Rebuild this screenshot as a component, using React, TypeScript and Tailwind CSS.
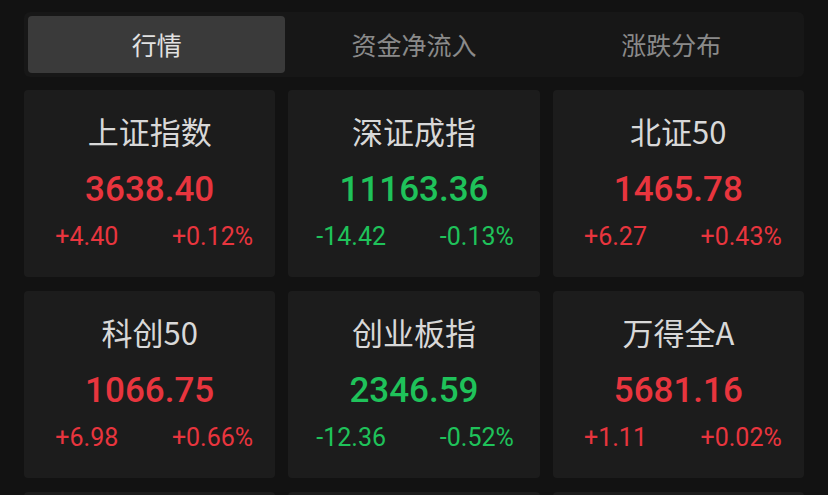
import React from 'react';

type Index = {
  name: string;
  price: string;
  change: string;
  percent: string;
  up: boolean;
};

const indices: Index[] = [
  { name: '上证指数', price: '3638.40', change: '+4.40', percent: '+0.12%', up: true },
  { name: '深证成指', price: '11163.36', change: '-14.42', percent: '-0.13%', up: false },
  { name: '北证50', price: '1465.78', change: '+6.27', percent: '+0.43%', up: true },
  { name: '科创50', price: '1066.75', change: '+6.98', percent: '+0.66%', up: true },
  { name: '创业板指', price: '2346.59', change: '-12.36', percent: '-0.52%', up: false },
  { name: '万得全A', price: '5681.16', change: '+1.11', percent: '+0.02%', up: true },
];

const tabs = ['行情', '资金净流入', '涨跌分布'];

const cjk = { fontFamily: '"Noto Sans CJK SC", "Noto Sans", sans-serif' };
const num = { fontFamily: 'Roboto, "Noto Sans CJK SC", sans-serif' };

const IndexCard: React.FC<{ item: Index }> = ({ item }) => {
  const color = item.up ? 'text-[#e8353e]' : 'text-[#1fc25a]';
  return (
    <div className="h-[187px] bg-[#1c1c1c] rounded-[4px] flex flex-col items-center pt-[21px]">
      <span className="text-[31px] leading-[40px] text-[#d8d8d8]" style={cjk}>
        {item.name}
      </span>
      <span className={`mt-[17px] text-[35px] leading-[44px] font-medium ${color}`} style={num}>
        {item.price}
      </span>
      <div className={`mt-[10px] w-full flex text-[25px] leading-[30px] ${color}`} style={num}>
        <span className="flex-1 text-center">{item.change}</span>
        <span className="flex-1 text-center">{item.percent}</span>
      </div>
    </div>
  );
};

const App: React.FC = () => {
  return (
    <div className="w-[828px] h-[495px] overflow-hidden bg-[#121212] px-[24px] pt-[12px]">
      <div className="h-[65px] bg-[#171717] rounded-[6px] p-[4px] flex">
        {tabs.map((t, i) => (
          <div
            key={t}
            className={`flex-1 flex items-center justify-center rounded-[4px] text-[25px] ${
              i === 0 ? 'bg-[#3a3a3a] text-[#e2e2e2]' : 'text-[#8a8a8a]'
            }`}
            style={cjk}
          >
            {t}
          </div>
        ))}
      </div>

      <div className="mt-[13px] grid grid-cols-3 gap-x-[13px] gap-y-[14px]">
        {indices.map(item => (
          <IndexCard key={item.name} item={item} />
        ))}
        <div className="h-[187px] bg-[#1c1c1c] rounded-[4px]" />
        <div className="h-[187px] bg-[#1c1c1c] rounded-[4px]" />
        <div className="h-[187px] bg-[#1c1c1c] rounded-[4px]" />
      </div>
    </div>
  );
};

export default App;
